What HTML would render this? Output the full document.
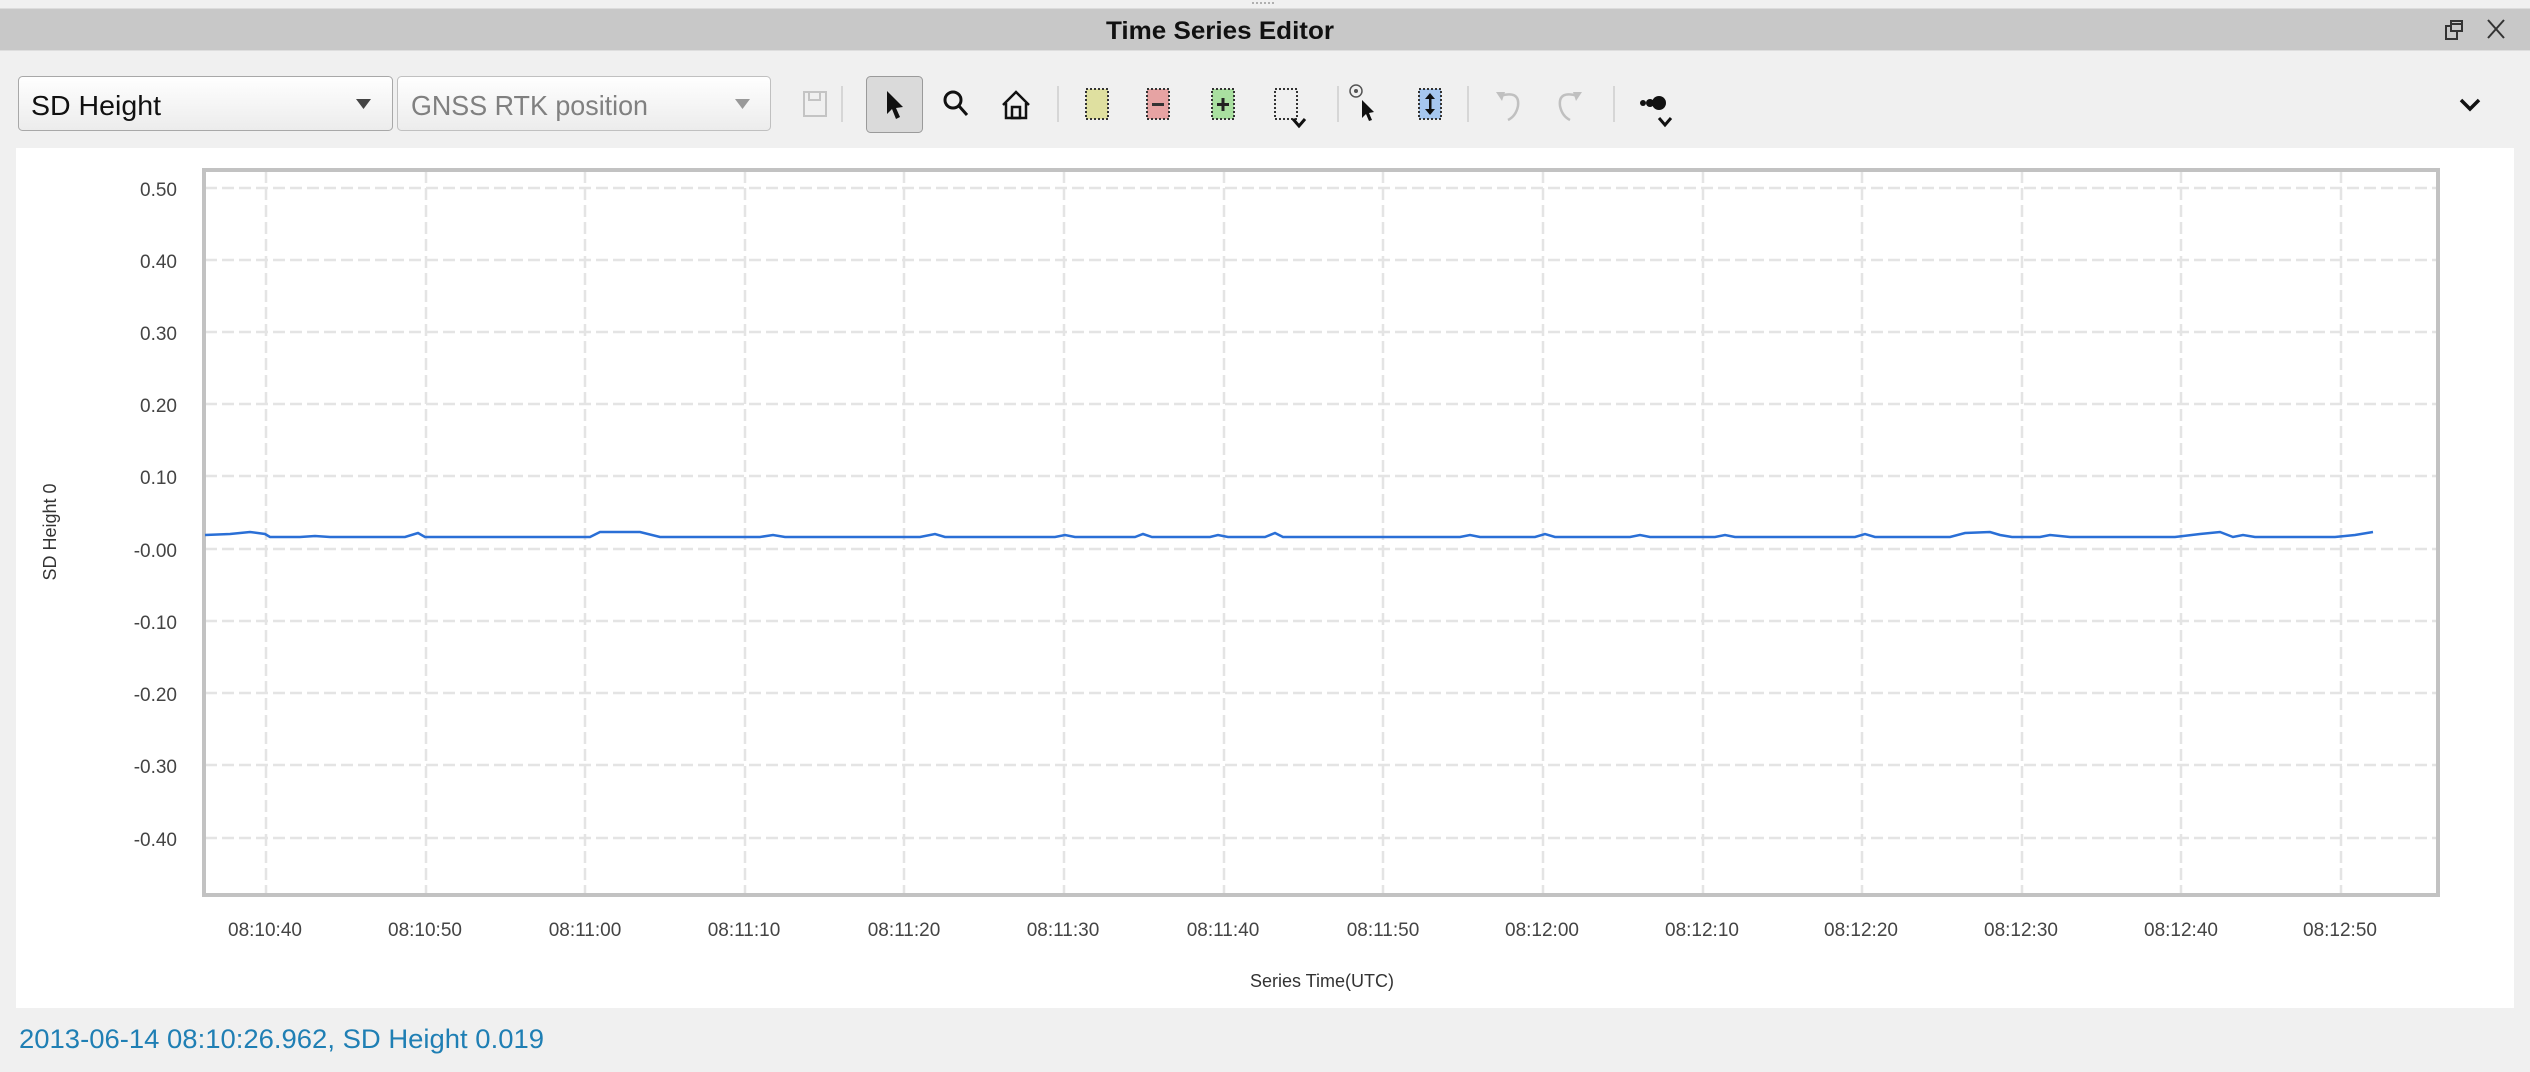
<!DOCTYPE html>
<html><head><meta charset="utf-8"><style>
html,body{margin:0;padding:0;background:#f0f0f0;width:2530px;height:1072px;overflow:hidden}
svg{display:block;font-family:"Liberation Sans",sans-serif}
</style></head><body>
<svg width="2530" height="1072" viewBox="0 0 2530 1072" xmlns="http://www.w3.org/2000/svg">
<defs>
<linearGradient id="cb" x1="0" y1="0" x2="0" y2="1"><stop offset="0" stop-color="#ffffff"/><stop offset="1" stop-color="#ececec"/></linearGradient>
</defs>
<rect width="2530" height="1072" fill="#f0f0f0"/>
<g fill="#b0b0b0"><rect x="1252" y="2" width="2" height="2"/><rect x="1256" y="2" width="2" height="2"/><rect x="1260" y="2" width="2" height="2"/><rect x="1264" y="2" width="2" height="2"/><rect x="1268" y="2" width="2" height="2"/><rect x="1272" y="2" width="2" height="2"/></g>
<rect x="0" y="8" width="2530" height="42" fill="#c8c8c8"/>
<rect x="0" y="8" width="2530" height="1" fill="#dcdcdc"/>
<rect x="0" y="50" width="2530" height="1" fill="#dedede"/>
<text x="1220" y="39" font-size="25" font-weight="bold" text-anchor="middle" fill="#111" textLength="228" lengthAdjust="spacingAndGlyphs">Time Series Editor</text>
<g stroke="#333" stroke-width="2" fill="none">
<rect x="2446" y="26" width="11" height="13"/><rect x="2451" y="21" width="11" height="10" fill="#c8c8c8"/><line x1="2451" y1="24" x2="2462" y2="24"/>
<line x1="2488" y1="20" x2="2504" y2="38"/><line x1="2504" y1="20" x2="2488" y2="38"/>
</g>
<rect x="18.5" y="76.5" width="374" height="54" rx="4" fill="url(#cb)" stroke="#a8a8a8"/>
<text x="31" y="115" font-size="28" fill="#111" textLength="130" lengthAdjust="spacingAndGlyphs">SD Height</text>
<path d="M356 99 L371 99 L363.5 109 Z" fill="#444"/>
<rect x="397.5" y="76.5" width="373" height="54" rx="4" fill="url(#cb)" stroke="#c0c0c0"/>
<text x="411" y="115" font-size="28" fill="#808080" textLength="237" lengthAdjust="spacingAndGlyphs">GNSS RTK position</text>
<path d="M735 99 L750 99 L742.5 109 Z" fill="#999"/>
<g fill="none" stroke="#c4c4c4" stroke-width="2"><rect x="804" y="92" width="22" height="24"/><rect x="809" y="92" width="11" height="8"/></g>
<line x1="842" y1="86" x2="842" y2="122" stroke="#d6d6d6" stroke-width="2"/>
<rect x="866.5" y="76.5" width="56" height="56" rx="4" fill="#dadada" stroke="#9a9a9a"/>
<path d="M887 91 L887 114 L892 109 L896 119 L900 117 L896 108 L903 107 Z" fill="#111"/>
<g stroke="#111" stroke-width="3" fill="none"><circle cx="953" cy="100" r="8"/><line x1="959" y1="106" x2="967" y2="115"/></g>
<g stroke="#111" stroke-width="2.5" fill="none"><path d="M1003 105 L1016 92 L1029 105"/><path d="M1006 103 L1006 118 L1026 118 L1026 103"/><rect x="1012" y="107" width="8" height="11"/></g>
<line x1="1058" y1="86" x2="1058" y2="122" stroke="#d6d6d6" stroke-width="2"/>
<rect x="1086" y="89" width="22" height="30" fill="#dfe0a0" stroke="#333" stroke-width="2" stroke-dasharray="2 2"/>
<rect x="1147" y="89" width="22" height="30" fill="#e6a3a3" stroke="#333" stroke-width="2" stroke-dasharray="2 2"/>
<rect x="1152" y="103" width="12" height="3" fill="#333"/>
<rect x="1212" y="89" width="22" height="30" fill="#a9dfa0" stroke="#333" stroke-width="2" stroke-dasharray="2 2"/>
<rect x="1217" y="103" width="12" height="3" fill="#222"/><rect x="1221.5" y="98" width="3" height="13" fill="#222"/>
<rect x="1275" y="89" width="22" height="30" fill="none" stroke="#333" stroke-width="2" stroke-dasharray="2 2"/>
<path d="M1293 119 L1299 126 L1305 119" stroke="#111" stroke-width="3" fill="none"/>
<line x1="1338" y1="86" x2="1338" y2="122" stroke="#d6d6d6" stroke-width="2"/>
<circle cx="1356" cy="91" r="6" fill="none" stroke="#555" stroke-width="1.5"/><circle cx="1356" cy="91" r="2" fill="#555"/>
<path d="M1362 100 L1362 118 L1366 114 L1369 121 L1372 120 L1369 113 L1374 112 Z" fill="#111"/>
<rect x="1419" y="89" width="22" height="30" fill="#a6c6ee" stroke="#333" stroke-width="2" stroke-dasharray="2 2"/>
<path d="M1430 93 L1425 99 L1435 99 Z M1430 115 L1425 109 L1435 109 Z" fill="#111"/><rect x="1429" y="98" width="2.5" height="12" fill="#111"/>
<line x1="1468" y1="86" x2="1468" y2="122" stroke="#d6d6d6" stroke-width="2"/>
<g stroke="#c0c0c0" stroke-width="2.5" fill="none"><path d="M1500 96 Q1520 90 1518 106 Q1516 116 1508 120"/><path d="M1578 96 Q1558 90 1560 106 Q1562 116 1570 120"/></g>
<path d="M1496 92 L1502 101 L1505 92 Z" fill="#c0c0c0"/><path d="M1582 92 L1576 101 L1573 92 Z" fill="#c0c0c0"/>
<line x1="1614" y1="86" x2="1614" y2="122" stroke="#d6d6d6" stroke-width="2"/>
<circle cx="1643" cy="103" r="3" fill="#111"/><circle cx="1650" cy="103" r="4" fill="#111"/><circle cx="1659" cy="103" r="7" fill="#111"/>
<path d="M1659 118 L1665 125 L1671 118" stroke="#111" stroke-width="3" fill="none"/>
<path d="M2461 100 L2470 109 L2479 100" stroke="#111" stroke-width="3.5" fill="none"/>
<rect x="16" y="148" width="2498" height="860" fill="#ffffff"/>
<g stroke="#e4e4e4" stroke-width="2.5" stroke-dasharray="12 5">
<line x1="205" y1="188" x2="2437" y2="188"/>
<line x1="205" y1="260" x2="2437" y2="260"/>
<line x1="205" y1="332" x2="2437" y2="332"/>
<line x1="205" y1="404" x2="2437" y2="404"/>
<line x1="205" y1="476" x2="2437" y2="476"/>
<line x1="205" y1="549" x2="2437" y2="549"/>
<line x1="205" y1="621" x2="2437" y2="621"/>
<line x1="205" y1="693" x2="2437" y2="693"/>
<line x1="205" y1="765" x2="2437" y2="765"/>
<line x1="205" y1="838" x2="2437" y2="838"/>
</g>
<g stroke="#e4e4e4" stroke-width="2.5" stroke-dasharray="12 5">
<line x1="266" y1="171" x2="266" y2="893"/><line x1="426" y1="171" x2="426" y2="893"/><line x1="585" y1="171" x2="585" y2="893"/><line x1="745" y1="171" x2="745" y2="893"/><line x1="904" y1="171" x2="904" y2="893"/><line x1="1064" y1="171" x2="1064" y2="893"/><line x1="1224" y1="171" x2="1224" y2="893"/><line x1="1383" y1="171" x2="1383" y2="893"/><line x1="1543" y1="171" x2="1543" y2="893"/><line x1="1703" y1="171" x2="1703" y2="893"/><line x1="1862" y1="171" x2="1862" y2="893"/><line x1="2022" y1="171" x2="2022" y2="893"/><line x1="2181" y1="171" x2="2181" y2="893"/><line x1="2341" y1="171" x2="2341" y2="893"/>
</g>
<rect x="204" y="170" width="2234" height="725" fill="none" stroke="#c2c2c2" stroke-width="4"/>
<path d="M205 535 L230 534 L250 532 L265 534 L270 537 L300 537 L315 536 L330 537 L405 537 L418 533 L425 537 L590 537 L600 532 L640 532 L660 537 L760 537 L773 535 L785 537 L920 537 L935 534 L945 537 L1055 537 L1065 535 L1075 537 L1135 537 L1143 534 L1152 537 L1210 537 L1218 535 L1228 537 L1265 537 L1275 533 L1283 537 L1460 537 L1470 535 L1480 537 L1535 537 L1545 534 L1555 537 L1630 537 L1640 535 L1650 537 L1715 537 L1725 535 L1735 537 L1855 537 L1865 534 L1875 537 L1950 537 L1965 533 L1990 532 L2000 535 L2012 537 L2040 537 L2050 535 L2070 537 L2175 537 L2200 534 L2220 532 L2233 537 L2243 535 L2255 537 L2335 537 L2355 535 L2373 532" fill="none" stroke="#2a6fd6" stroke-width="2.5"/>
<g font-size="19" fill="#444" text-anchor="end">
<text x="177" y="196">0.50</text><text x="177" y="268">0.40</text><text x="177" y="340">0.30</text><text x="177" y="412">0.20</text><text x="177" y="484">0.10</text><text x="177" y="557">-0.00</text><text x="177" y="629">-0.10</text><text x="177" y="701">-0.20</text><text x="177" y="773">-0.30</text><text x="177" y="846">-0.40</text>
</g>
<text transform="translate(56,532) rotate(-90)" font-size="18" fill="#333" text-anchor="middle">SD Height 0</text>
<g font-size="19" fill="#444" text-anchor="middle">
<text x="265" y="936">08:10:40</text><text x="425" y="936">08:10:50</text><text x="585" y="936">08:11:00</text><text x="744" y="936">08:11:10</text><text x="904" y="936">08:11:20</text><text x="1063" y="936">08:11:30</text><text x="1223" y="936">08:11:40</text><text x="1383" y="936">08:11:50</text><text x="1542" y="936">08:12:00</text><text x="1702" y="936">08:12:10</text><text x="1861" y="936">08:12:20</text><text x="2021" y="936">08:12:30</text><text x="2181" y="936">08:12:40</text><text x="2340" y="936">08:12:50</text>
</g>
<text x="1322" y="987" font-size="18" fill="#333" text-anchor="middle">Series Time(UTC)</text>
<text x="19" y="1048" font-size="27" fill="#1f7fb4" textLength="525" lengthAdjust="spacingAndGlyphs">2013-06-14 08:10:26.962, SD Height 0.019</text>
</svg>
</body></html>
